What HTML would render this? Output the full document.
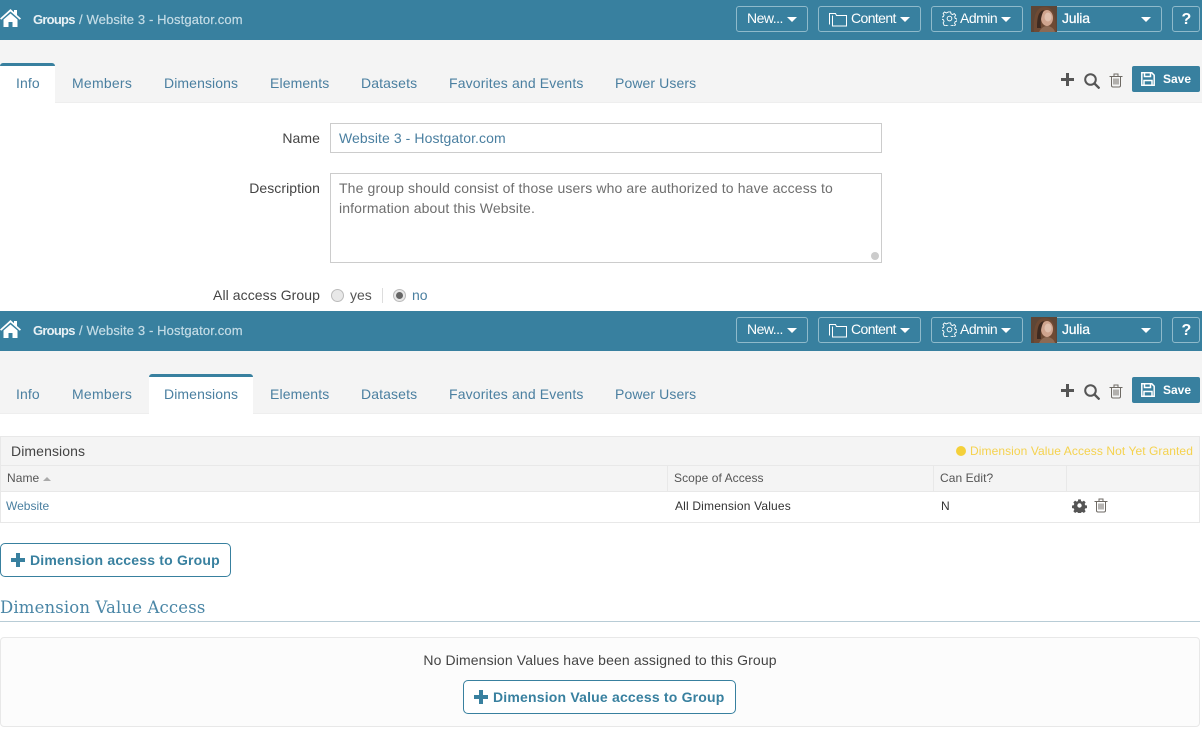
<!DOCTYPE html>
<html><head><meta charset="utf-8"><style>
html,body{margin:0;padding:0;width:1202px;height:736px;overflow:hidden;background:#fff;font-family:"Liberation Sans",sans-serif}
.a{position:absolute;white-space:nowrap}
.wrap{position:absolute;left:0;width:1202px;height:103px}
.hdr{position:absolute;left:0;top:0;width:1202px;height:40px;background:#38809f}
.bar{position:absolute;left:0;top:40px;width:1202px;height:62px;background:#f4f4f4;border-bottom:1px solid #eee}
.btn{position:absolute;top:6px;height:24px;border:1px solid #8fbacb;border-radius:3px;color:#fff;font-size:14px;line-height:24px;box-sizing:content-box}
.tab{position:absolute;top:75px;font-size:14px;line-height:16px;color:#4a7fa0;white-space:nowrap}
.act{position:absolute;top:63px;height:40px;background:#fff;border-top:3px solid #38809f;border-radius:3px 3px 0 0;box-sizing:border-box}
.car{display:inline-block;width:0;height:0;border-left:5px solid transparent;border-right:5px solid transparent;border-top:5px solid #fff;position:absolute}
.lbl{font-size:14px;color:#444;text-align:right;letter-spacing:.07px}
.th{position:absolute;top:466px;height:25px;border-right:1px solid #e8e8e8;font-size:12px;line-height:25px;color:#555;letter-spacing:.06px}
.obtn{position:absolute;box-sizing:border-box;height:34px;border:1px solid #38809f;border-radius:5px;background:#fff;color:#38809f;font-weight:bold;font-size:14px;line-height:32px;letter-spacing:.19px;white-space:nowrap}
</style></head><body>

<div class="wrap" style="top:0">
<div class="hdr">
<svg class="a" style="left:0;top:8px" width="22" height="20" viewBox="0 0 22 20"><path d="M0 10.500 10.500 1l3.500 3.200V2h3v5l4 3.500-1.200 1.300L10.500 3.500 1.200 11.800z" fill="#fff"/><path d="M3.500 11.500 10.500 5.500l7 6V19h-5v-5H8.500v5h-5z" fill="#fff"/></svg>
<span class="a" style="left:33px;top:12px;font-size:13px;line-height:16px;font-weight:bold;color:#e8f1f5;letter-spacing:-.75px">Groups</span>
<span class="a" style="left:79px;top:12px;font-size:13px;line-height:16px;color:#c4dce6;letter-spacing:.13px;-webkit-text-stroke:.2px #c4dce6">/ Website 3 - Hostgator.com</span>
<div class="btn" style="left:736px;width:70px"><span class="a" style="left:10px;top:-1px;letter-spacing:-.5px">New...</span><i class="car" style="left:50px;top:10px"></i></div>
<div class="btn" style="left:818px;width:101px"><svg class="a" style="left:10px;top:5px" width="19" height="15" viewBox="0 0 19 15" fill="none" stroke="#fff"><path d="M.5 12.500V1.500h6l1 2h10v10.500H3.500V3.500"/></svg><span class="a" style="left:32px;top:-1px;letter-spacing:-.6px">Content</span><i class="car" style="left:81px;top:10px"></i></div>
<div class="btn" style="left:931px;width:90px"><svg class="a" style="left:10px;top:4px" width="15" height="15" viewBox="0 0 16 16" fill="none" stroke="#fff"><circle cx="8" cy="8" r="2.500"/><path d="M6.800 1h2.400l.4 2 1.700.8 1.800-1 1.500 1.700-1.100 1.700.6 1.800 1.900.5v2.300l-1.900.5-.7 1.700 1 1.700-1.600 1.600-1.700-1-1.700.7-.5 1.900H6.700l-.4-1.900-1.800-.7-1.700 1L1.200 12.700l1-1.700-.7-1.700-1.900-.5V6.500l1.900-.5.700-1.800-1-1.700L2.800 1l1.700 1.100 1.800-.8z"/></svg><span class="a" style="left:28px;top:-1px;letter-spacing:-.5px">Admin</span><i class="car" style="left:69px;top:10px"></i></div>
<div class="btn" style="left:1031px;width:129px"><svg class="a" style="left:-1px;top:-1px" width="26" height="26" viewBox="0 0 26 26"><rect width="26" height="26" fill="#5e4636"/><path d="M3 26C2 10 5 1 14 1c9 0 11 10 11 25z" fill="#6e4a34"/><ellipse cx="16" cy="12" rx="6" ry="8" fill="#cfa48e"/><ellipse cx="17" cy="11" rx="3.500" ry="4.500" fill="#e0c0ae"/><path d="M8 26c2-4 5-6 8-6s7 2 8 6z" fill="#8c6a54"/><path d="M6 22C6 10 8 5 13 4c-2 4-4 9-3 18z" fill="#3e2a20"/></svg><span class="a" style="left:30px;top:-1px;letter-spacing:-.2px;-webkit-text-stroke:.25px #fff">Julia</span><i class="car" style="left:109px;top:10px"></i></div>
<div class="btn" style="left:1172px;width:26px"><span class="a" style="left:8.500px;top:1px;font-weight:bold;font-size:16px">?</span></div>
</div>
<div class="bar"></div>
<div class="act" style="left:0;width:55px"></div>
<span class="tab" style="left:16px;letter-spacing:.1px">Info</span><span class="tab" style="left:72px;letter-spacing:.25px">Members</span><span class="tab" style="left:164px;letter-spacing:.1px">Dimensions</span><span class="tab" style="left:270px;letter-spacing:.12px">Elements</span><span class="tab" style="left:361px;letter-spacing:.12px">Datasets</span><span class="tab" style="left:449px;letter-spacing:.15px">Favorites and Events</span><span class="tab" style="left:615px;letter-spacing:.1px">Power Users</span>
<svg class="a" style="left:1061px;top:73px" width="13" height="13" viewBox="0 0 13 13"><path d="M5 0h3v5h5v3H8v5H5V8H0V5h5z" fill="#555"/></svg>
<svg class="a" style="left:1084px;top:73px" width="16" height="16" viewBox="0 0 16 16" fill="none" stroke="#555"><circle cx="6.500" cy="6.500" r="5.300" stroke-width="2"/><path d="M10.500 10.500l5 5" stroke-width="2.300"/></svg>
<svg class="a" style="left:1109px;top:73px" width="14" height="15" viewBox="0 0 14 15" fill="none" stroke="#6e6a64"><path d="M.5 3.500h13M5 3V1h4v2M2.500 3.500v9c0 1 .5 1.500 1.500 1.500h6c1 0 1.500-.5 1.500-1.500v-9M5 5.500v6M7 5.500v6M9 5.500v6"/></svg>
<div class="a" style="left:1132px;top:66px;width:68px;height:26px;background:#38809f;border-radius:2px"><svg class="a" style="left:9px;top:6px" width="14" height="14" viewBox="0 0 14 14" fill="none" stroke="#fff" stroke-width="1.500"><path d="M.8.800h10l2.400 2.400v10H.8z"/><path d="M3.500 1v3.500h6V1M3 13V8.500h8V13"/></svg><span class="a" style="left:31px;top:5px;font-size:12px;line-height:16px;font-weight:bold;color:#fff">Save</span></div>
</div>

<span class="a lbl" style="right:882px;top:130px;line-height:16px">Name</span>
<div class="a" style="left:330px;top:123px;width:552px;height:30px;box-sizing:border-box;border:1px solid #ccc;font-size:14px;line-height:28px;padding-left:8px;color:#4a7fa0;letter-spacing:.08px">Website 3 - Hostgator.com</div>
<span class="a lbl" style="right:882px;top:180px;line-height:16px">Description</span>
<div class="a" style="left:330px;top:173px;width:552px;height:90px;box-sizing:border-box;border:1px solid #ccc;font-size:14px;line-height:20px;padding:4px 8px;color:#6e6e6e;white-space:normal;letter-spacing:.13px">The group should consist of those users who are authorized to have access to information about this Website.<i class="a" style="right:2px;bottom:2px;width:8px;height:8px;border-radius:50%;background:#ccc"></i></div>
<span class="a lbl" style="right:882px;top:287px;line-height:16px">All access Group</span>
<i class="a" style="left:331px;top:289px;width:11px;height:11px;border:1px solid #bbb;border-radius:50%;background:#e8e8e8"></i>
<span class="a" style="left:350px;top:287px;font-size:14px;line-height:16px;color:#555">yes</span>
<i class="a" style="left:382px;top:288px;width:1px;height:15px;background:#ddd"></i>
<i class="a" style="left:393px;top:289px;width:11px;height:11px;border:1px solid #bbb;border-radius:50%;background:#e8e8e8"></i>
<i class="a" style="left:396px;top:292px;width:7px;height:7px;border-radius:50%;background:#666"></i>
<span class="a" style="left:412px;top:287px;font-size:14px;line-height:16px;color:#4a7fa0">no</span>

<div class="wrap" style="top:311px">
<div class="hdr">
<svg class="a" style="left:0;top:8px" width="22" height="20" viewBox="0 0 22 20"><path d="M0 10.500 10.500 1l3.500 3.200V2h3v5l4 3.500-1.200 1.300L10.500 3.500 1.200 11.800z" fill="#fff"/><path d="M3.500 11.500 10.500 5.500l7 6V19h-5v-5H8.500v5h-5z" fill="#fff"/></svg>
<span class="a" style="left:33px;top:12px;font-size:13px;line-height:16px;font-weight:bold;color:#e8f1f5;letter-spacing:-.75px">Groups</span>
<span class="a" style="left:79px;top:12px;font-size:13px;line-height:16px;color:#c4dce6;letter-spacing:.13px;-webkit-text-stroke:.2px #c4dce6">/ Website 3 - Hostgator.com</span>
<div class="btn" style="left:736px;width:70px"><span class="a" style="left:10px;top:-1px;letter-spacing:-.5px">New...</span><i class="car" style="left:50px;top:10px"></i></div>
<div class="btn" style="left:818px;width:101px"><svg class="a" style="left:10px;top:5px" width="19" height="15" viewBox="0 0 19 15" fill="none" stroke="#fff"><path d="M.5 12.500V1.500h6l1 2h10v10.500H3.500V3.500"/></svg><span class="a" style="left:32px;top:-1px;letter-spacing:-.6px">Content</span><i class="car" style="left:81px;top:10px"></i></div>
<div class="btn" style="left:931px;width:90px"><svg class="a" style="left:10px;top:4px" width="15" height="15" viewBox="0 0 16 16" fill="none" stroke="#fff"><circle cx="8" cy="8" r="2.500"/><path d="M6.800 1h2.400l.4 2 1.700.8 1.800-1 1.500 1.700-1.100 1.700.6 1.800 1.900.5v2.300l-1.900.5-.7 1.700 1 1.700-1.600 1.600-1.700-1-1.700.7-.5 1.900H6.700l-.4-1.900-1.800-.7-1.700 1L1.200 12.700l1-1.700-.7-1.700-1.900-.5V6.500l1.900-.5.700-1.800-1-1.700L2.800 1l1.700 1.100 1.800-.8z"/></svg><span class="a" style="left:28px;top:-1px;letter-spacing:-.5px">Admin</span><i class="car" style="left:69px;top:10px"></i></div>
<div class="btn" style="left:1031px;width:129px"><svg class="a" style="left:-1px;top:-1px" width="26" height="26" viewBox="0 0 26 26"><rect width="26" height="26" fill="#5e4636"/><path d="M3 26C2 10 5 1 14 1c9 0 11 10 11 25z" fill="#6e4a34"/><ellipse cx="16" cy="12" rx="6" ry="8" fill="#cfa48e"/><ellipse cx="17" cy="11" rx="3.500" ry="4.500" fill="#e0c0ae"/><path d="M8 26c2-4 5-6 8-6s7 2 8 6z" fill="#8c6a54"/><path d="M6 22C6 10 8 5 13 4c-2 4-4 9-3 18z" fill="#3e2a20"/></svg><span class="a" style="left:30px;top:-1px;letter-spacing:-.2px;-webkit-text-stroke:.25px #fff">Julia</span><i class="car" style="left:109px;top:10px"></i></div>
<div class="btn" style="left:1172px;width:26px"><span class="a" style="left:8.500px;top:1px;font-weight:bold;font-size:16px">?</span></div>
</div>
<div class="bar"></div>
<div class="act" style="left:149px;width:104px"></div>
<span class="tab" style="left:16px;letter-spacing:.1px">Info</span><span class="tab" style="left:72px;letter-spacing:.25px">Members</span><span class="tab" style="left:164px;letter-spacing:.1px">Dimensions</span><span class="tab" style="left:270px;letter-spacing:.12px">Elements</span><span class="tab" style="left:361px;letter-spacing:.12px">Datasets</span><span class="tab" style="left:449px;letter-spacing:.15px">Favorites and Events</span><span class="tab" style="left:615px;letter-spacing:.1px">Power Users</span>
<svg class="a" style="left:1061px;top:73px" width="13" height="13" viewBox="0 0 13 13"><path d="M5 0h3v5h5v3H8v5H5V8H0V5h5z" fill="#555"/></svg>
<svg class="a" style="left:1084px;top:73px" width="16" height="16" viewBox="0 0 16 16" fill="none" stroke="#555"><circle cx="6.500" cy="6.500" r="5.300" stroke-width="2"/><path d="M10.500 10.500l5 5" stroke-width="2.300"/></svg>
<svg class="a" style="left:1109px;top:73px" width="14" height="15" viewBox="0 0 14 15" fill="none" stroke="#6e6a64"><path d="M.5 3.500h13M5 3V1h4v2M2.500 3.500v9c0 1 .5 1.500 1.500 1.500h6c1 0 1.500-.5 1.500-1.500v-9M5 5.500v6M7 5.500v6M9 5.500v6"/></svg>
<div class="a" style="left:1132px;top:66px;width:68px;height:26px;background:#38809f;border-radius:2px"><svg class="a" style="left:9px;top:6px" width="14" height="14" viewBox="0 0 14 14" fill="none" stroke="#fff" stroke-width="1.500"><path d="M.8.800h10l2.400 2.400v10H.8z"/><path d="M3.500 1v3.500h6V1M3 13V8.500h8V13"/></svg><span class="a" style="left:31px;top:5px;font-size:12px;line-height:16px;font-weight:bold;color:#fff">Save</span></div>
</div>

<div class="a" style="left:0;top:436px;width:1200px;height:87px;box-sizing:border-box;border:1px solid #e8e8e8;background:#fff"></div>
<div class="a" style="left:1px;top:437px;width:1198px;height:54px;background:#f4f4f4"></div>
<div class="a" style="left:1px;top:465px;width:1198px;height:1px;background:#e8e8e8"></div>
<div class="a" style="left:1px;top:491px;width:1198px;height:1px;background:#e8e8e8"></div>
<span class="a" style="left:11px;top:443px;font-size:14px;line-height:16px;color:#444;letter-spacing:.1px">Dimensions</span>
<i class="a" style="left:956px;top:446px;width:10px;height:10px;border-radius:50%;background:#f4d03a"></i>
<span class="a" style="left:970px;top:443px;font-size:12px;line-height:16px;color:#f5d24e;letter-spacing:.08px">Dimension Value Access Not Yet Granted</span>
<div class="th" style="left:1px;width:666px"><span class="a" style="left:6px;top:0">Name</span><i class="a" style="left:42px;top:11px;border-left:4px solid transparent;border-right:4px solid transparent;border-bottom:4px solid #aaa"></i></div>
<div class="th" style="left:668px;width:265px"><span class="a" style="left:6px;top:0">Scope of Access</span></div>
<div class="th" style="left:934px;width:132px"><span class="a" style="left:6px;top:0">Can Edit?</span></div>
<span class="a" style="left:6px;top:498px;font-size:12px;line-height:16px;color:#4a7fa0">Website</span>
<span class="a" style="left:675px;top:498px;font-size:12px;line-height:16px;color:#333;letter-spacing:.17px">All Dimension Values</span>
<span class="a" style="left:941px;top:498px;font-size:12px;line-height:16px;color:#333">N</span>
<svg class="a" style="left:1072px;top:498px" width="15" height="15" viewBox="0 0 15 15"><path d="M6 .5h3l.3 2 1.500.6 1.700-1.100 2 2-1.100 1.700.6 1.500 2 .3v3l-2 .3-.6 1.500 1.100 1.700-2 2-1.700-1.100-1.500.6-.3 2H6l-.3-2-1.500-.6-1.700 1.100-2-2 1.100-1.700-.6-1.500-2-.3v-3l2-.3.6-1.500L.5 4l2-2 1.700 1.100 1.500-.6z" transform="translate(.9 .9) scale(.88)" fill="#555"/><circle cx="7.500" cy="7.500" r="2.200" fill="#fff"/></svg>
<svg class="a" style="left:1094px;top:498px" width="14" height="15" viewBox="0 0 14 15" fill="none" stroke="#6e6a64"><path d="M.5 3.500h13M5 3V1h4v2M2.500 3.500v9c0 1 .5 1.500 1.500 1.500h6c1 0 1.500-.5 1.500-1.500v-9M5 5.500v6M7 5.500v6M9 5.500v6"/></svg>

<div class="obtn" style="left:0;top:543px;width:231px"><svg class="a" style="left:10px;top:9px" width="14" height="14" viewBox="0 0 14 14"><path d="M5 0h4v5h5v4H9v5H5V9H0V5h5z" fill="#38809f"/></svg><span class="a" style="left:29px;top:0">Dimension access to Group</span></div>
<span class="a" style="left:0;top:597px;font-family:'DejaVu Serif',serif;font-size:16.500px;line-height:22px;color:#4a86a6;letter-spacing:.14px">Dimension Value Access</span>
<div class="a" style="left:0;top:621px;width:1200px;height:1px;background:#b8ccd6"></div>
<div class="a" style="left:0;top:637px;width:1200px;height:90px;box-sizing:border-box;border:1px solid #e8e8e8;border-radius:4px;background:#fcfcfc"></div>
<div class="a" style="left:0;top:652px;width:1200px;text-align:center;font-size:14px;line-height:16px;color:#444;letter-spacing:.125px">No Dimension Values have been assigned to this Group</div>
<div class="obtn" style="left:463px;top:680px;width:273px"><svg class="a" style="left:10px;top:9px" width="14" height="14" viewBox="0 0 14 14"><path d="M5 0h4v5h5v4H9v5H5V9H0V5h5z" fill="#38809f"/></svg><span class="a" style="left:29px;top:0">Dimension Value access to Group</span></div>
</body></html>
